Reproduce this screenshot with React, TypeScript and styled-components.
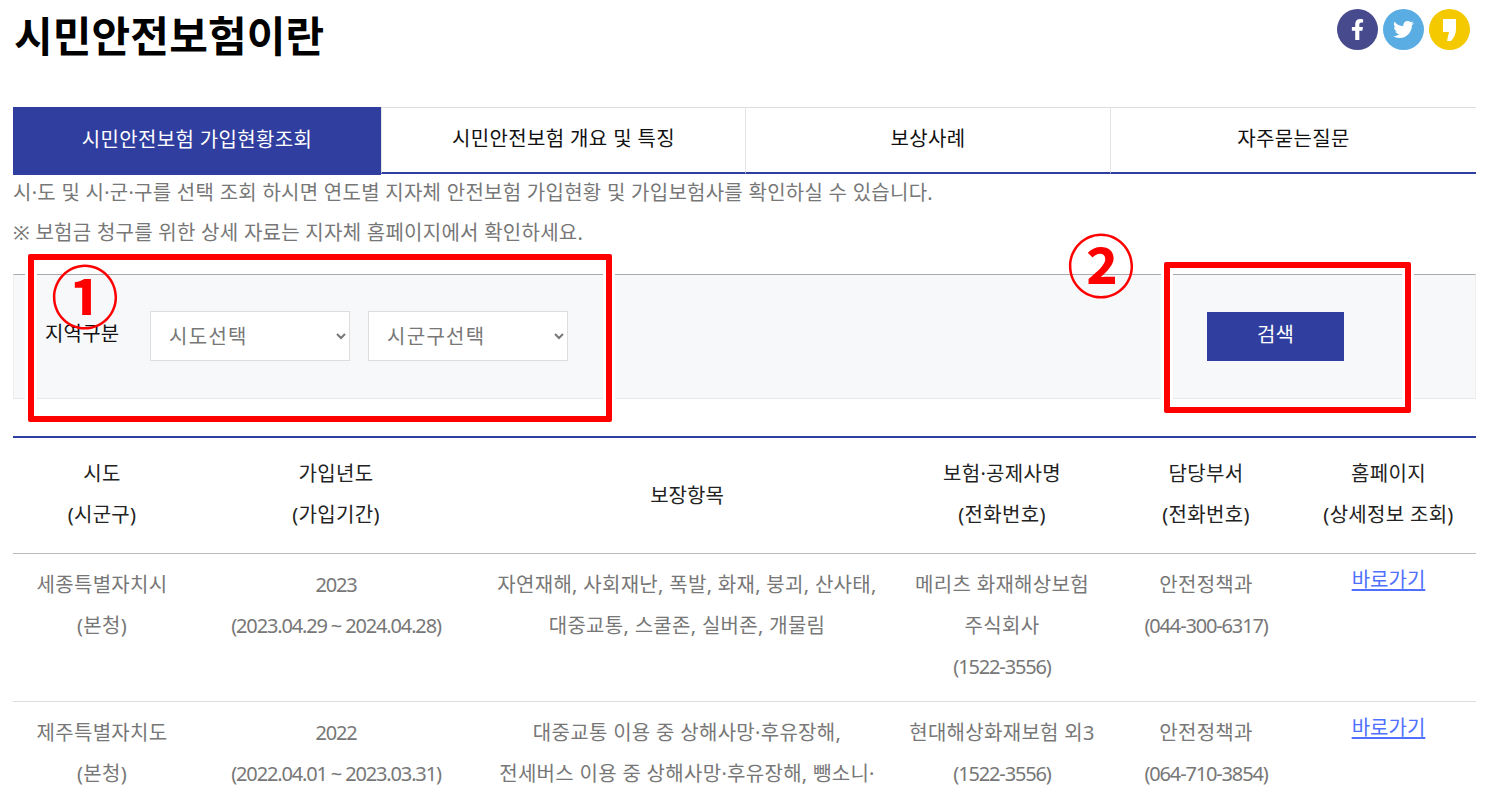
import React, { FC } from 'react';
import styled, { createGlobalStyle } from 'styled-components';
import { FaFacebookF, FaTwitter } from 'react-icons/fa';

const blue = '#303e9f';
const grey = '#777777';

const GlobalStyle = createGlobalStyle`
  html, body {
    margin: 0;
    padding: 0;
    height: 801px;
    overflow: hidden;
    background: #fff;
    font-family: "Noto Sans", "Noto Sans CJK KR", sans-serif;
  }
`;

const Page = styled.div`
  position: relative;
  padding: 0 34px 0 13px;
  width: 1463px;
  height: 801px;
  overflow: hidden;
`;

const TitleBar = styled.header`
  display: flex;
  justify-content: space-between;
  align-items: flex-start;
  height: 107px;
`;

const Title = styled.h1`
  margin: 9px 0 0 1px;
  font-size: 42px;
  line-height: 54px;
  font-weight: 700;
  letter-spacing: 0.15px;
  color: #000;
`;

const ShareList = styled.div`
  display: flex;
  gap: 5px;
  margin: 9px 6px 0 0;
  filter: blur(0.3px);
`;

const ShareButton = styled.span<{ $color: string }>`
  display: flex;
  align-items: center;
  justify-content: center;
  width: 41px;
  height: 41px;
  border-radius: 50%;
  background: ${props => props.$color};
  color: #fff;
  font-size: 21px;
`;

const Tabs = styled.nav`
  display: grid;
  grid-template-columns: 368px 364px 365px 366px;
  height: 68px;
`;

const Tab = styled.div<{ $active?: boolean }>`
  display: flex;
  align-items: center;
  justify-content: center;
  box-sizing: border-box;
  font-size: 20px;
  letter-spacing: 0.35px;
  padding-bottom: 6px;
  height: ${props => (props.$active ? '68px' : '67px')};
  color: ${props => (props.$active ? '#fff' : '#111')};
  background: ${props => (props.$active ? blue : '#fff')};
  border-top: ${props => (props.$active ? 'none' : '1px solid #ddd')};
  border-bottom: ${props => (props.$active ? 'none' : `2px solid ${blue}`)};
  & + & {
    border-left: 1px solid #e4e4e4;
  }
`;

const Notice = styled.p`
  margin: 0;
  font-size: 20px;
  line-height: 40px;
  letter-spacing: 0.26px;
  color: ${grey};
  position: relative;
  top: -2px;
`;

const Notices = styled.div`
  height: 99px;
`;

const SearchPanel = styled.section`
  display: flex;
  align-items: flex-start;
  box-sizing: border-box;
  height: 125px;
  padding: 36px 0 0 31px;
  background: #f7f8fa;
  border-top: 1px solid #aaa;
  border-bottom: 1px solid #e8e8ea;
  border-left: 1px solid #eee;
  border-right: 1px solid #eee;
`;

const FieldLabel = styled.label`
  width: 105px;
  font-size: 20px;
  line-height: 46px;
  letter-spacing: 0.2px;
  color: #111;
`;

const RegionSelect = styled.select`
  box-sizing: border-box;
  width: 200px;
  height: 50px;
  margin-right: 18px;
  padding: 0 14px;
  background: #fff;
  border: 1px solid #ddd;
  border-radius: 0;
  font-family: inherit;
  font-size: 20px;
  letter-spacing: 1.3px;
  color: ${grey};
`;

const SearchButton = styled.button`
  margin: 1px 131px 0 auto;
  width: 137px;
  height: 49px;
  padding: 0 0 6px;
  border: none;
  background: ${blue};
  color: #fff;
  font-family: inherit;
  font-size: 20px;
`;

const ResultTable = styled.table`
  width: 1463px;
  margin-top: 37px;
  table-layout: fixed;
  border-collapse: collapse;
  border-top: 2px solid ${blue};
`;

const HeadCell = styled.th`
  height: 112px;
  padding: 0 0 3px;
  font-size: 20px;
  font-weight: 400;
  text-align: center;
  color: #222;
  border-bottom: 1px solid #bbb;
`;

const BodyCell = styled.td`
  height: 148px;
  padding: 10px 0 0;
  box-sizing: border-box;
  vertical-align: top;
  font-size: 20px;
  text-align: center;
  color: ${grey};
  border-bottom: 1px solid #ddd;
`;

const CellLine = styled.div<{ $numeric?: boolean }>`
  height: 41px;
  line-height: 41px;
  white-space: nowrap;
  letter-spacing: ${props => (props.$numeric ? '-1.15px' : '0.3px')};
`;

const HomeLink = styled.a`
  color: #4f70ff;
  text-decoration: underline;
  text-decoration-thickness: 2px;
  text-underline-offset: 2px;
`;

const Callout = styled.div<{ $left: number; $top: number; $width: number; $height: number }>`
  position: absolute;
  box-sizing: border-box;
  left: ${props => props.$left}px;
  top: ${props => props.$top}px;
  width: ${props => props.$width}px;
  height: ${props => props.$height}px;
  border: 6px solid #ff0000;
  border-radius: 2px;
  box-shadow: 0 0 0 3px #fff, inset 0 0 0 3px #fff;
`;

const CalloutNumber = styled.span<{ $left: number; $top: number }>`
  position: absolute;
  left: ${props => props.$left}px;
  top: ${props => props.$top}px;
  font-family: "Noto Sans CJK KR", sans-serif;
  font-size: 68px;
  font-weight: 700;
  line-height: 80px;
  color: #ff0000;
`;

const KakaoIcon: FC = () => (
  <svg width="16" height="24" viewBox="0 0 16 24" aria-hidden="true">
    <path d="M1 1h13v10c0 5-2 9-5 12H5l2-9H1z" fill="#fff" />
  </svg>
);

const columns = [178, 290, 412, 218, 190, 175];

const rows = [
  {
    region: ['세종특별자치시', '(본청)'],
    year: ['2023', '(2023.04.29 ~ 2024.04.28)'],
    cover: ['자연재해, 사회재난, 폭발, 화재, 붕괴, 산사태,', '대중교통, 스쿨존, 실버존, 개물림'],
    insurer: ['메리츠 화재해상보험', '주식회사', '(1522-3556)'],
    dept: ['안전정책과', '(044-300-6317)'],
  },
  {
    region: ['제주특별자치도', '(본청)'],
    year: ['2022', '(2022.04.01 ~ 2023.03.31)'],
    cover: ['대중교통 이용 중 상해사망·후유장해,', '전세버스 이용 중 상해사망·후유장해, 뺑소니·'],
    insurer: ['현대해상화재보험 외3', '(1522-3556)'],
    dept: ['안전정책과', '(064-710-3854)'],
  },
];

const Lines: FC<{ items: string[] }> = ({ items }) => (
  <>
    {items.map(item => (
      <CellLine key={item} $numeric={/^\(?\d/.test(item)}>
        {item}
      </CellLine>
    ))}
  </>
);

export default function App() {
  return (
    <Page>
      <GlobalStyle />
      <TitleBar>
        <Title>시민안전보험이란</Title>
        <ShareList>
          <ShareButton $color="#474a8c">
            <FaFacebookF />
          </ShareButton>
          <ShareButton $color="#59ade2">
            <FaTwitter />
          </ShareButton>
          <ShareButton $color="#f4c900">
            <KakaoIcon />
          </ShareButton>
        </ShareList>
      </TitleBar>
      <Tabs>
        <Tab $active>시민안전보험 가입현황조회</Tab>
        <Tab>시민안전보험 개요 및 특징</Tab>
        <Tab>보상사례</Tab>
        <Tab>자주묻는질문</Tab>
      </Tabs>
      <Notices>
        <Notice>시·도 및 시·군·구를 선택 조회 하시면 연도별 지자체 안전보험 가입현황 및 가입보험사를 확인하실 수 있습니다.</Notice>
        <Notice>※ 보험금 청구를 위한 상세 자료는 지자체 홈페이지에서 확인하세요.</Notice>
      </Notices>
      <SearchPanel>
        <FieldLabel>지역구분</FieldLabel>
        <RegionSelect defaultValue="시도선택">
          <option>시도선택</option>
        </RegionSelect>
        <RegionSelect defaultValue="시군구선택">
          <option>시군구선택</option>
        </RegionSelect>
        <SearchButton>검색</SearchButton>
      </SearchPanel>
      <ResultTable>
        <colgroup>
          {columns.map(width => (
            <col key={width} width={width} />
          ))}
        </colgroup>
        <thead>
          <tr>
            <HeadCell><Lines items={['시도', '(시군구)']} /></HeadCell>
            <HeadCell><Lines items={['가입년도', '(가입기간)']} /></HeadCell>
            <HeadCell>보장항목</HeadCell>
            <HeadCell><Lines items={['보험·공제사명', '(전화번호)']} /></HeadCell>
            <HeadCell><Lines items={['담당부서', '(전화번호)']} /></HeadCell>
            <HeadCell><Lines items={['홈페이지', '(상세정보 조회)']} /></HeadCell>
          </tr>
        </thead>
        <tbody>
          {rows.map(row => (
            <tr key={row.region[0]}>
              <BodyCell><Lines items={row.region} /></BodyCell>
              <BodyCell><Lines items={row.year} /></BodyCell>
              <BodyCell><Lines items={row.cover} /></BodyCell>
              <BodyCell><Lines items={row.insurer} /></BodyCell>
              <BodyCell><Lines items={row.dept} /></BodyCell>
              <BodyCell><HomeLink href="#">바로가기</HomeLink></BodyCell>
            </tr>
          ))}
        </tbody>
      </ResultTable>
      <Callout $left={28} $top={254} $width={584} $height={168} />
      <Callout $left={1164} $top={262} $width={247} $height={151} />
      <CalloutNumber $left={51} $top={254}>①</CalloutNumber>
      <CalloutNumber $left={1067} $top={223}>②</CalloutNumber>
    </Page>
  );
}
